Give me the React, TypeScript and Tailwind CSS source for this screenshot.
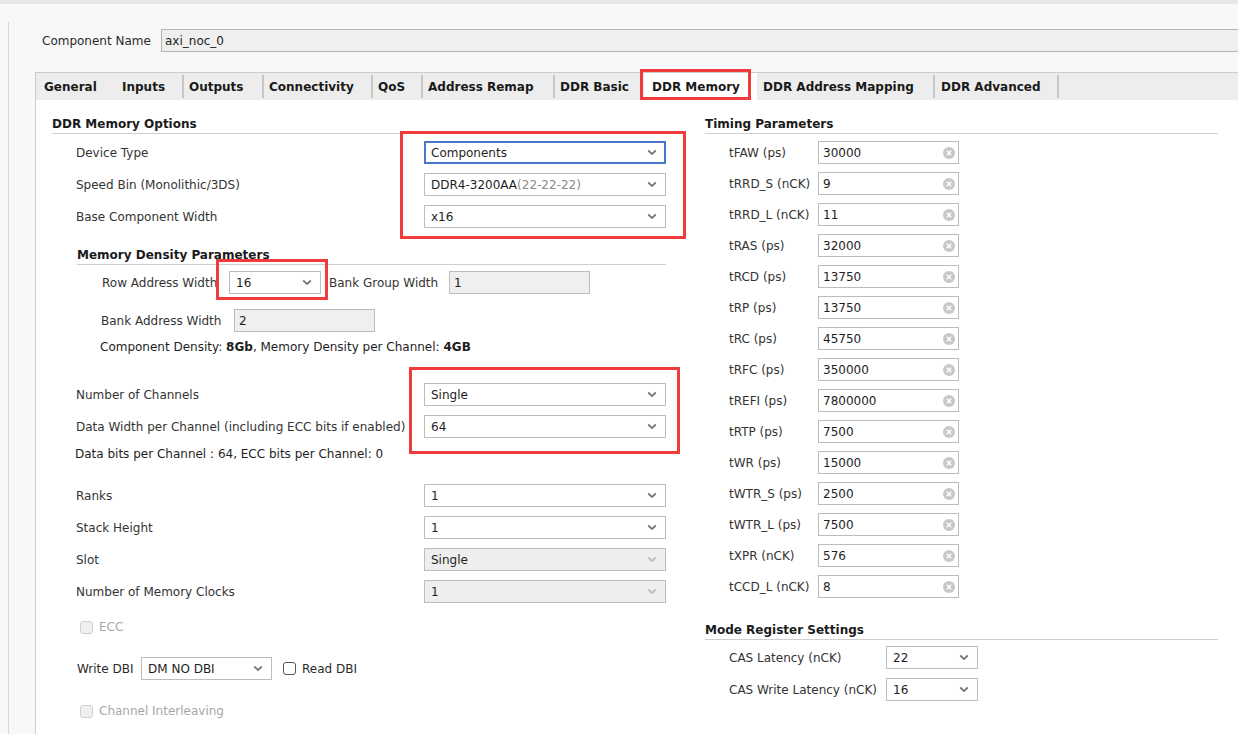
import React from "react";

const tabs = [
  { label: "General", w: "w-[79px]", pl: "pl-[8px]", sep: false },
  { label: "Inputs", w: "w-[69px]", pl: "pl-[7px]", sep: true },
  { label: "Outputs", w: "w-[80px]", pl: "pl-[5px]", sep: true },
  { label: "Connectivity", w: "w-[109px]", pl: "pl-[5px]", sep: true },
  { label: "QoS", w: "w-[50px]", pl: "pl-[5px]", sep: true },
  { label: "Address Remap", w: "w-[132px]", pl: "pl-[5px]", sep: true },
  { label: "DDR Basic", w: "w-[89px]", pl: "pl-[5px]", sep: false },
  { label: "DDR Memory", w: "w-[113px]", pl: "pl-[8px]", sep: false, active: true },
  { label: "DDR Address Mapping", w: "w-[178px]", pl: "pl-[6px]", sep: true },
  { label: "DDR Advanced", w: "w-[124px]", pl: "pl-[6px]", sep: true },
];

const timing = [
  ["tFAW (ps)", "30000"],
  ["tRRD_S (nCK)", "9"],
  ["tRRD_L (nCK)", "11"],
  ["tRAS (ps)", "32000"],
  ["tRCD (ps)", "13750"],
  ["tRP (ps)", "13750"],
  ["tRC (ps)", "45750"],
  ["tRFC (ps)", "350000"],
  ["tREFI (ps)", "7800000"],
  ["tRTP (ps)", "7500"],
  ["tWR (ps)", "15000"],
  ["tWTR_S (ps)", "2500"],
  ["tWTR_L (ps)", "7500"],
  ["tXPR (nCK)", "576"],
  ["tCCD_L (nCK)", "8"],
];

function Chevron({ disabled = false }: { disabled?: boolean }) {
  return (
    <svg width="10" height="7" viewBox="0 0 10 7" className="shrink-0">
      <path
        d="M1.2 1.5 L5 5 L8.8 1.5"
        fill="none"
        stroke={disabled ? "#bdbdbd" : "#777777"}
        strokeWidth="1.7"
      />
    </svg>
  );
}

function ClearIcon() {
  return (
    <svg width="12" height="12" viewBox="0 0 12 12" className="shrink-0">
      <circle cx="6" cy="6" r="6" fill="#c8c8c8" />
      <path d="M3.8 3.8 L8.2 8.2 M8.2 3.8 L3.8 8.2" stroke="#ffffff" strokeWidth="1.5" />
    </svg>
  );
}

function Select({
  value,
  width,
  disabled = false,
  focused = false,
  children,
}: {
  value?: string;
  width: string;
  disabled?: boolean;
  focused?: boolean;
  children?: React.ReactNode;
}) {
  return (
    <div
      className={`${width} flex h-[23px] shrink-0 items-center justify-between ${
        focused ? "border-2 border-[#4a78c8] pl-[5px] pr-[7px]" : "border border-[#bdbdbd] pl-[6px] pr-[8px]"
      } ${disabled ? "bg-[#eeeeee]" : "bg-white"}`}
    >
      <span className="text-[#1e1e1e]">{children ?? value}</span>
      <Chevron disabled={disabled} />
    </div>
  );
}

function TextBox({ value, width, gray = false, clear = false }: { value: string; width: string; gray?: boolean; clear?: boolean }) {
  return (
    <div
      className={`${width} flex h-[23px] shrink-0 items-center justify-between border border-[#bcbcbc] pl-[4px] pr-[3px] ${
        gray ? "bg-[#efefef]" : "bg-white"
      }`}
    >
      <span className="text-[#1e1e1e]">{value}</span>
      {clear ? <ClearIcon /> : null}
    </div>
  );
}

function Checkbox({ label, disabled = false }: { label: string; disabled?: boolean }) {
  return (
    <div className="flex h-[14px] items-center gap-[6px]">
      <span
        className={`h-[13px] w-[13px] rounded-[3px] border ${
          disabled ? "border-[#cfcfcf] bg-[#efefef]" : "border-[#555555] bg-white"
        }`}
      />
      <span className={disabled ? "text-[#a8a8a8]" : "text-[#2a2a2a]"}>{label}</span>
    </div>
  );
}

function Row({ label, children }: { label: string; children: React.ReactNode }) {
  return (
    <div className="flex h-[23px] items-center">
      <span className="w-[372px] shrink-0 whitespace-nowrap pl-[24px] text-[#333333]">{label}</span>
      {children}
    </div>
  );
}

function SectionTitle({ title }: { title: string }) {
  return (
    <div className="h-[17px] border-b border-[#cfcfcf] font-bold text-[#1a1a1a]">{title}</div>
  );
}

export default function App() {
  return (
    <div
      className="flex h-[734px] w-[1238px] flex-col overflow-hidden bg-[#f8f8f8] text-[12px] leading-[14px]"
      style={{ fontFamily: '"DejaVu Sans", Verdana, sans-serif' }}
    >
      <div className="h-[4px] shrink-0 bg-[#e6e6e6]" />
      <div className="flex flex-1">
        <div className="mt-[18px] w-[9px] shrink-0 border-r border-[#d6d6d6]" />
        <div className="flex min-w-0 flex-1 flex-col">
          {/* component name */}
          <div className="mt-[25px] flex h-[23px] items-center pl-[33px]">
            <span className="w-[119px] shrink-0 text-[#2a2a2a]">Component Name</span>
            <div className="-mr-px flex h-[23px] flex-1 items-center border border-[#b4b4b4] bg-[#efefef] pl-[3px] text-[#1e1e1e]">
              axi_noc_0
            </div>
          </div>

          {/* tab panel */}
          <div className="ml-[26px] mt-[20px] flex flex-1 flex-col border-l border-t border-[#cbcbcb]">
            <div className="flex h-[27px] shrink-0 bg-[#ededed]">
              {tabs.map((tab) => (
                <div
                  key={tab.label}
                  className={`${tab.w} ${tab.pl} relative flex shrink-0 items-center justify-between font-bold text-[#1a1a1a] ${
                    tab.active ? "bg-white" : ""
                  }`}
                >
                  <span className="whitespace-nowrap">{tab.label}</span>
                  {tab.sep ? <span className="h-[23px] w-[2px] bg-[#c6c6c6]" /> : null}
                  {tab.active ? (
                    <span className="absolute left-[-4px] top-[-4px] h-[31px] w-[111px] border-[3px] border-[#ef3b3b]" />
                  ) : null}
                </div>
              ))}
            </div>

            <div className="flex flex-1 bg-white">
              {/* left column */}
              <div className="w-[650px] shrink-0 pl-[16px] pt-[17px]">
                <SectionTitle title="DDR Memory Options" />

                <div className="relative mt-[7px] flex flex-col gap-[9px]">
                  <Row label="Device Type">
                    <Select value="Components" width="w-[242px]" focused />
                  </Row>
                  <Row label="Speed Bin (Monolithic/3DS)">
                    <Select width="w-[242px]">
                      DDR4-3200AA<span className="text-[#8a8a8a]">(22-22-22)</span>
                    </Select>
                  </Row>
                  <Row label="Base Component Width">
                    <Select value="x16" width="w-[242px]" />
                  </Row>
                  <span className="absolute left-[348px] top-[-10px] h-[108px] w-[286px] border-[3px] border-[#ef3b3b]" />
                </div>

                {/* memory density */}
                <div className="ml-[25px] mt-[20px] w-[589px]">
                  <SectionTitle title="Memory Density Parameters" />
                  <div className="mt-[6px] flex h-[23px] items-center pl-[25px]">
                    <span className="w-[127px] shrink-0 text-[#333333]">Row Address Width</span>
                    <div className="relative">
                      <Select value="16" width="w-[92px]" />
                      <span className="absolute left-[-13px] top-[-12px] h-[41px] w-[112px] border-[3px] border-[#ef3b3b]" />
                    </div>
                    <span className="ml-[8px] w-[120px] shrink-0 text-[#333333]">Bank Group Width</span>
                    <TextBox value="1" width="w-[141px]" gray />
                  </div>
                  <div className="mt-[15px] flex h-[23px] items-center pl-[24px]">
                    <span className="w-[133px] shrink-0 text-[#333333]">Bank Address Width</span>
                    <TextBox value="2" width="w-[141px]" gray />
                  </div>
                  <div className="mt-[8px] h-[14px] pl-[23px] text-[#1e1e1e]">
                    Component Density: <b>8Gb</b>, Memory Density per Channel: <b>4GB</b>
                  </div>
                </div>

                <div className="relative mt-[29px] flex flex-col gap-[9px]">
                  <Row label="Number of Channels">
                    <Select value="Single" width="w-[242px]" />
                  </Row>
                  <Row label="Data Width per Channel (including ECC bits if enabled)">
                    <Select value="64" width="w-[242px]" />
                  </Row>
                  <span className="absolute left-[357px] top-[-16px] h-[87px] w-[271px] border-[3px] border-[#ef3b3b]" />
                </div>
                <div className="mt-[9px] h-[14px] pl-[23px] text-[#1e1e1e]">
                  Data bits per Channel : 64, ECC bits per Channel: 0
                </div>

                <div className="mt-[23px] flex flex-col gap-[9px]">
                  <Row label="Ranks">
                    <Select value="1" width="w-[242px]" />
                  </Row>
                  <Row label="Stack Height">
                    <Select value="1" width="w-[242px]" />
                  </Row>
                  <Row label="Slot">
                    <Select value="Single" width="w-[242px]" disabled />
                  </Row>
                  <Row label="Number of Memory Clocks">
                    <Select value="1" width="w-[242px]" disabled />
                  </Row>
                </div>

                <div className="mt-[17px] pl-[28px]">
                  <Checkbox label="ECC" disabled />
                </div>

                <div className="mt-[23px] flex h-[23px] items-center pl-[25px]">
                  <span className="w-[64px] shrink-0 text-[#2a2a2a]">Write DBI</span>
                  <Select value="DM NO DBI" width="w-[131px]" />
                  <div className="ml-[11px]">
                    <Checkbox label="Read DBI" />
                  </div>
                </div>

                <div className="mt-[24px] pl-[28px]">
                  <Checkbox label="Channel Interleaving" disabled />
                </div>
              </div>

              {/* right column */}
              <div className="w-[532px] shrink-0 pl-[19px] pt-[17px]">
                <div className="w-[513px]">
                  <SectionTitle title="Timing Parameters" />
                </div>
                <div className="mt-[7px] flex flex-col gap-[8px]">
                  {timing.map(([label, value]) => (
                    <div key={label} className="flex h-[23px] items-center">
                      <span className="w-[113px] shrink-0 pl-[24px] text-[#333333]">{label}</span>
                      <TextBox value={value} width="w-[141px]" clear />
                    </div>
                  ))}
                </div>

                <div className="mt-[25px] w-[513px]">
                  <SectionTitle title="Mode Register Settings" />
                </div>
                <div className="mt-[6px] flex flex-col gap-[9px]">
                  <div className="flex h-[23px] items-center">
                    <span className="w-[181px] shrink-0 pl-[24px] text-[#333333]">CAS Latency (nCK)</span>
                    <Select value="22" width="w-[92px]" />
                  </div>
                  <div className="flex h-[23px] items-center">
                    <span className="w-[181px] shrink-0 pl-[24px] text-[#333333]">CAS Write Latency (nCK)</span>
                    <Select value="16" width="w-[92px]" />
                  </div>
                </div>
              </div>
            </div>
          </div>
        </div>
      </div>
    </div>
  );
}
